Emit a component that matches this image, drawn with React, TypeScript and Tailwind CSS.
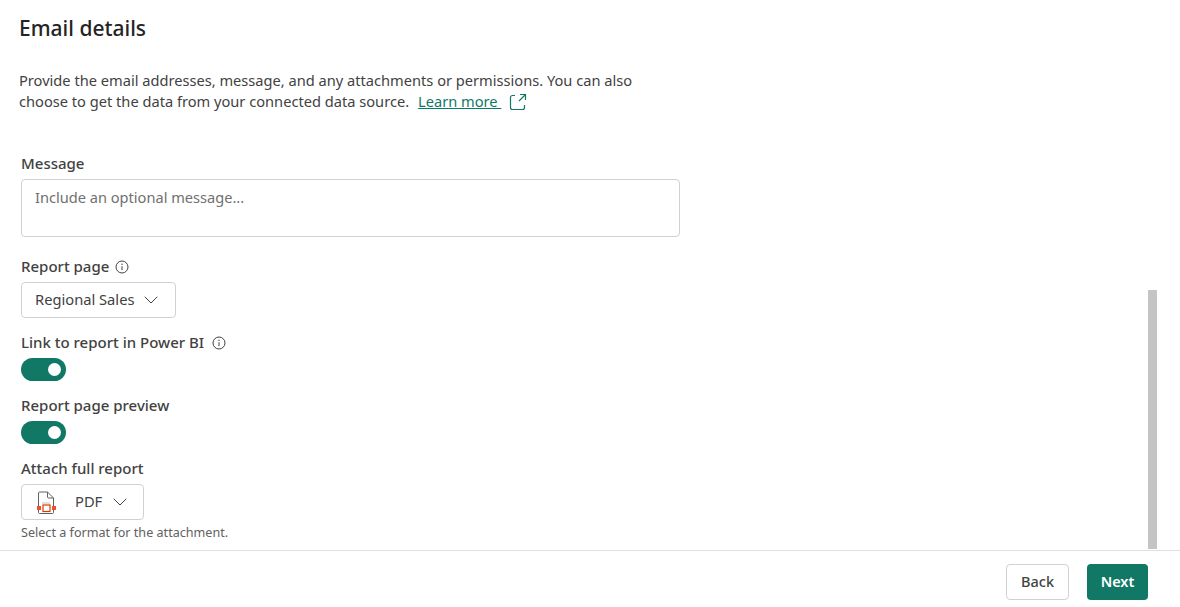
import { ChevronDown } from 'lucide-react';

function InfoIcon() {
  return (
    <svg width="14" height="14" viewBox="0 0 14 14" fill="none" stroke="#424242">
      <circle cx="7" cy="7" r="6" strokeWidth="1" />
      <path d="M7 6.2V10.2" strokeWidth="1" />
      <circle cx="7" cy="4.2" r="0.7" fill="#424242" stroke="none" />
    </svg>
  );
}

function Toggle() {
  return (
    <div className="flex h-[23px] w-[45px] items-center justify-end rounded-full bg-[#117865] pr-[5px]">
      <div className="h-[13px] w-[13px] rounded-full bg-white" />
    </div>
  );
}

function PdfIcon() {
  return (
    <svg width="22" height="24" viewBox="0 0 22 24" fill="none">
      <path d="M2.5 16V3C2.5 2.4 2.9 2 3.5 2H11.5L17.5 8V16" stroke="#616161" strokeWidth="1" />
      <path d="M2.5 20V22.5C2.5 23.1 2.9 23.5 3.5 23.5H16.5C17.1 23.5 17.5 23.1 17.5 22.5V20" stroke="#616161" strokeWidth="1" />
      <path d="M11.5 2V7C11.5 7.6 11.9 8 12.5 8H17.5" stroke="#616161" strokeWidth="1" />
      <path d="M6 13H14" stroke="#bdbdbd" strokeWidth="1" />
      <rect x="7" y="15" width="7" height="6.5" stroke="#d83b01" strokeWidth="1.2" />
      <rect x="1" y="16" width="4" height="4" fill="#e8532b" />
      <rect x="16" y="16" width="4" height="4" fill="#e8532b" />
    </svg>
  );
}

export default function App() {
  return (
    <div className="relative flex h-[607px] w-[1180px] flex-col overflow-hidden bg-white font-['Noto_Sans',sans-serif] text-[#242424]">
      <main className="flex-1 pl-[19px]">
        <h1 className="pt-[13px] text-[21px] leading-[30px] font-medium">Email details</h1>

        <div className="mt-[27px] w-[625px] text-[14.64px] leading-[21px] text-[#424242]">
          <p>Provide the email addresses, message, and any attachments or permissions. You can also</p>
          <div className="flex items-center">
            <span>choose to get the data from your connected data source.</span>
            <a className="ml-[9px] whitespace-pre text-[#0e7a66] underline">Learn more </a>
            <svg className="ml-[8px]" width="18" height="18" viewBox="0 0 18 18" fill="none" stroke="#117865" strokeWidth="1.2">
              <path d="M6 2.5H3.5C2.4 2.5 1.5 3.4 1.5 4.5V14.5C1.5 15.6 2.4 16.5 3.5 16.5H13.5C14.6 16.5 15.5 15.6 15.5 14.5V12" />
              <path d="M10 8L16 2M11 1.5H16.5V7" />
            </svg>
          </div>
        </div>

        <div className="ml-[2px]">
          <label className="mt-[41px] block text-[15px] leading-[21px] font-medium text-[#424242]">Message</label>
          <div className="mt-[5px] h-[58px] w-[659px] rounded border border-[#d1d1d1] px-[13px] py-[7px] text-[14.6px] leading-[21px] text-[#707070]">
            Include an optional message...
          </div>

          <div className="mt-[19px] flex items-center gap-[6px] text-[15px] leading-[21px] font-medium text-[#424242]">
            Report page <InfoIcon />
          </div>
          <div className="mt-[5px] flex h-[36px] w-[155px] items-center gap-[5px] rounded border border-[#d1d1d1] pl-[13px] text-[14.7px] text-[#424242]">
            <span className="mb-[2px]">Regional Sales</span> <ChevronDown size={24} strokeWidth={1} />
          </div>

          <div className="mt-[14px] flex items-center gap-[8px] text-[15px] leading-[21px] font-medium text-[#424242]">
            Link to report in Power BI <InfoIcon />
          </div>
          <div className="mt-[5px]"><Toggle /></div>

          <div className="mt-[14px] text-[15px] leading-[21px] font-medium text-[#424242]">Report page preview</div>
          <div className="mt-[5px]"><Toggle /></div>

          <div className="mt-[14px] text-[15px] leading-[21px] font-medium text-[#424242]">Attach full report</div>
          <div className="mt-[5px] flex h-[36px] w-[123px] items-center rounded border border-[#d1d1d1] pl-[14px] text-[14.7px] text-[#424242]">
            <PdfIcon />
            <span className="mb-[2px] ml-[17px]">PDF</span>
            <ChevronDown className="ml-[6px]" size={24} strokeWidth={1} />
          </div>
          <p className="mt-[4px] text-[12.6px] leading-[18px] text-[#616161]">Select a format for the attachment.</p>
        </div>
      </main>

      <div className="absolute top-[290px] left-[1148px] h-[259px] w-[9px] bg-[#c4c4c4]" />

      <footer className="flex h-[57px] items-start justify-end gap-[18px] border-t border-[#e0e0e0] pt-[13px] pr-[32px] text-[14.5px] font-semibold">
        <button className="h-[36px] w-[63px] rounded border border-[#d1d1d1] font-medium text-[#424242]">Back</button>
        <button className="h-[36px] w-[61px] rounded bg-[#117865] text-white">Next</button>
      </footer>
    </div>
  );
}
